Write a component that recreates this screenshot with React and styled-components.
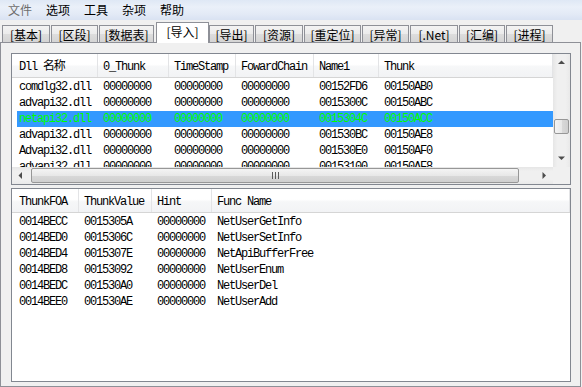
import React from 'react';
import styled, { createGlobalStyle, css } from 'styled-components';

const Global = createGlobalStyle`
  html, body { margin: 0; padding: 0; background: #f0f0f0; }
  body { width: 582px; height: 387px; overflow: hidden; }
  #root { width: 582px; height: 387px; }
`;

const Window = styled.div`
  width: 582px;
  height: 387px;
  display: flex;
  flex-direction: column;
  background: #f0f0f0;
  font-family: "Noto Sans CJK SC", sans-serif;
  font-size: 12px;
  color: #000;
`;

const MenuBar = styled.div`
  height: 20px;
  display: flex;
  align-items: center;
  padding-left: 1px;
  background: linear-gradient(to bottom, #dfe8f5 0%, #eaf0f9 35%, #e3eaf6 70%, #d9e2f2 100%);
`;

const MenuItem = styled.div`
  padding: 0 7px;
  line-height: 20px;
  height: 20px;
  color: ${p => (p.$disabled ? '#6d6d6d' : '#000')};
`;

const TabStrip = styled.div`
  height: 22px;
  display: flex;
  align-items: flex-end;
  gap: 1px;
  padding-left: 2px;
  position: relative;
  z-index: 1;
`;

const Tab = styled.div`
  box-sizing: border-box;
  width: ${p => p.$w}px;
  height: 17px;
  border: 1px solid #8e9097;
  border-bottom: none;
  background: linear-gradient(to bottom, #f3f3f3 0%, #ebebeb 50%, #dddddd 51%, #d4d4d4 100%);
  display: flex;
  align-items: center;
  justify-content: center;
  line-height: 14px;
  font-size: 12px;
  white-space: nowrap;
  padding-top: 1px;
  ${p => p.$active && css`
    height: 21px;
    margin: 0 -1px -1px 1px;
    background: #ffffff;
    padding-top: 0;
    padding-bottom: 2px;
  `}
`;

const Panel = styled.div`
  flex: 1;
  box-sizing: border-box;
  margin-right: 1px;
  border: 1px solid #8e9097;
  padding: 10px 9px 4px 10px;
  display: flex;
  flex-direction: column;
  gap: 3px;
  background: #f0f0f0;
`;

const ListBox = styled.div`
  box-sizing: border-box;
  height: ${p => p.$h}px;
  border: 1px solid #828790;
  background: #fff;
  display: grid;
  grid-template-columns: ${p => (p.$scroll ? '1fr 17px' : '1fr')};
  grid-template-rows: ${p => (p.$scroll ? '1fr 17px' : '1fr')};
  overflow: hidden;
`;

const ListArea = styled.div`
  overflow: hidden;
  font-family: "Liberation Mono", "Noto Sans CJK SC", monospace;
  font-size: 12px;
  letter-spacing: -1.2px;
`;

const Header = styled.div`
  display: grid;
  grid-template-columns: ${p => p.$cols};
  height: 23px;
  border-bottom: 1px solid #d5d5d5;
  background: linear-gradient(to bottom, #ffffff 0%, #ffffff 45%, #f6f7f8 55%, #f2f3f5 100%);
`;

const HeadCell = styled.div`
  box-sizing: border-box;
  border-right: 1px solid #e3e4e6;
  padding-left: ${p => (p.$first ? 7 : 5)}px;
  line-height: 27px;
  white-space: nowrap;
  overflow: hidden;
`;

const Rows = styled.div`
  padding-top: 1px;
`;

const Row = styled.div`
  display: grid;
  grid-template-columns: ${p => p.$cols};
  margin-left: 5px;
  height: 16px;
  line-height: 17px;
  white-space: nowrap;
  background: ${p => (p.$sel ? '#3399ff' : 'transparent')};
  color: ${p => (p.$sel ? '#00ff00' : '#000')};
`;

const Cell = styled.div`
  box-sizing: border-box;
  padding-left: ${p => (p.$first ? 2 : 5)}px;
  overflow: hidden;
`;

const VScroll = styled.div`
  display: flex;
  flex-direction: column;
  background: linear-gradient(to right, #e6e6e6 0%, #f0f0f0 25%, #f0f0f0 75%, #e9e9e9 100%);
`;

const HScroll = styled.div`
  display: flex;
  background: linear-gradient(to bottom, #e6e6e6 0%, #f0f0f0 25%, #f0f0f0 75%, #e9e9e9 100%);
`;

const ArrowBtn = styled.div`
  width: 17px;
  height: 17px;
  flex: none;
  display: flex;
  align-items: center;
  justify-content: center;
`;

const VTrack = styled.div`
  flex: 1;
  display: flex;
  flex-direction: column;
  align-items: center;
`;

const HTrack = styled.div`
  flex: 1;
  display: flex;
  align-items: center;
`;

const VThumb = styled.div`
  box-sizing: border-box;
  width: 15px;
  height: 15px;
  border: 1px solid #979797;
  border-radius: 2px;
  background: linear-gradient(to right, #f4f4f4 0%, #e8e8e8 50%, #d9d9d9 51%, #cfcfcf 100%);
`;

const HThumb = styled.div`
  box-sizing: border-box;
  height: 15px;
  border: 1px solid #979797;
  border-radius: 2px;
  background: linear-gradient(to bottom, #f4f4f4 0%, #e8e8e8 50%, #d9d9d9 51%, #cfcfcf 100%);
  display: flex;
  align-items: center;
  justify-content: center;
`;

const Corner = styled.div`
  background: #f0f0f0;
`;

const Arrow = ({ dir }) => {
  const pts = {
    up: '0,4 7,4 3.5,0.5',
    down: '0,0.5 7,0.5 3.5,4',
    left: '4,0 4,7 0.5,3.5',
    right: '0.5,0 0.5,7 4,3.5',
  }[dir];
  const vertical = dir === 'up' || dir === 'down';
  return (
    <svg width={vertical ? 7 : 5} height={vertical ? 5 : 7} viewBox={vertical ? '0 0 7 5' : '0 0 5 7'}>
      <polygon points={pts} fill="#4d4d4d" />
    </svg>
  );
};

const Grip = () => (
  <svg width="7" height="7" viewBox="0 0 7 7">
    <rect x="0" y="0" width="1" height="7" fill="#5a5a5a" />
    <rect x="3" y="0" width="1" height="7" fill="#5a5a5a" />
    <rect x="6" y="0" width="1" height="7" fill="#5a5a5a" />
  </svg>
);

const ListView = ({ columns, rows, selected, height, scroll }) => {
  const headCols = columns.map(c => (c ? `${c}px` : '1fr')).join(' ');
  const rowCols = columns.map((c, i) => (c ? `${i === 0 ? c - 5 : c}px` : '1fr')).join(' ');
  return (
    <ListBox $h={height} $scroll={scroll}>
      <ListArea>
        <Header $cols={headCols}>
          {rows.head.map((h, i) => (
            <HeadCell key={i} $first={i === 0}>{h}</HeadCell>
          ))}
        </Header>
        <Rows>
          {rows.data.map((r, ri) => (
            <Row key={ri} $cols={rowCols} $sel={ri === selected}>
              {r.map((c, ci) => (
                <Cell key={ci} $first={ci === 0}>{c}</Cell>
              ))}
            </Row>
          ))}
        </Rows>
      </ListArea>
      {scroll && (
        <>
          <VScroll>
            <ArrowBtn><Arrow dir="up" /></ArrowBtn>
            <VTrack>
              <VThumb style={{ marginTop: scroll.vTop }} />
            </VTrack>
            <ArrowBtn><Arrow dir="down" /></ArrowBtn>
          </VScroll>
          <HScroll>
            <ArrowBtn><Arrow dir="left" /></ArrowBtn>
            <HTrack>
              <HThumb style={{ marginLeft: 2, width: scroll.hWidth }}><Grip /></HThumb>
            </HTrack>
            <ArrowBtn><Arrow dir="right" /></ArrowBtn>
          </HScroll>
          <Corner />
        </>
      )}
    </ListBox>
  );
};

const menus = [
  { label: '文件', disabled: true },
  { label: '选项' },
  { label: '工具' },
  { label: '杂项' },
  { label: '帮助' },
];

const tabs = [
  { label: '[基本]', w: 48 },
  { label: '[区段]', w: 47 },
  { label: '[数据表]', w: 55 },
  { label: '[导入]', w: 53, active: true },
  { label: '[导出]', w: 45 },
  { label: '[资源]', w: 48 },
  { label: '[重定位]', w: 57 },
  { label: '[异常]', w: 47 },
  { label: '[.Net]', w: 48 },
  { label: '[汇编]', w: 46 },
  { label: '[进程]', w: 47 },
];

const imports = {
  head: ['Dll 名称', '0_Thunk', 'TimeStamp', 'FowardChain', 'Name1', 'Thunk'],
  data: [
    ['comdlg32.dll', '00000000', '00000000', '00000000', '00152FD6', '00150AB0'],
    ['advapi32.dll', '00000000', '00000000', '00000000', '0015300C', '00150ABC'],
    ['netapi32.dll', '00000000', '00000000', '00000000', '0015304C', '00150ACC'],
    ['advapi32.dll', '00000000', '00000000', '00000000', '001530BC', '00150AE8'],
    ['Advapi32.dll', '00000000', '00000000', '00000000', '001530E0', '00150AF0'],
    ['advapi32.dll', '00000000', '00000000', '00000000', '00153100', '00150AF8'],
  ],
};

const funcs = {
  head: ['ThunkFOA', 'ThunkValue', 'Hint', 'Func Name'],
  data: [
    ['0014BECC', '0015305A', '00000000', 'NetUserGetInfo'],
    ['0014BED0', '0015306C', '00000000', 'NetUserSetInfo'],
    ['0014BED4', '0015307E', '00000000', 'NetApiBufferFree'],
    ['0014BED8', '00153092', '00000000', 'NetUserEnum'],
    ['0014BEDC', '001530A0', '00000000', 'NetUserDel'],
    ['0014BEE0', '001530AE', '00000000', 'NetUserAdd'],
  ],
};

export default function App() {
  return (
    <>
      <Global />
      <Window>
        <MenuBar>
          {menus.map(m => (
            <MenuItem key={m.label} $disabled={m.disabled}>{m.label}</MenuItem>
          ))}
        </MenuBar>
        <TabStrip>
          {tabs.map(t => (
            <Tab key={t.label} $w={t.w} $active={t.active}>{t.label}</Tab>
          ))}
        </TabStrip>
        <Panel>
          <ListView
            height={132}
            columns={[86, 71, 67, 78, 65, 0]}
            rows={imports}
            selected={2}
            scroll={{ vTop: 48, hWidth: 488 }}
          />
          <ListView
            height={194}
            columns={[67, 73, 60, 0]}
            rows={funcs}
            selected={-1}
          />
        </Panel>
      </Window>
    </>
  );
}
